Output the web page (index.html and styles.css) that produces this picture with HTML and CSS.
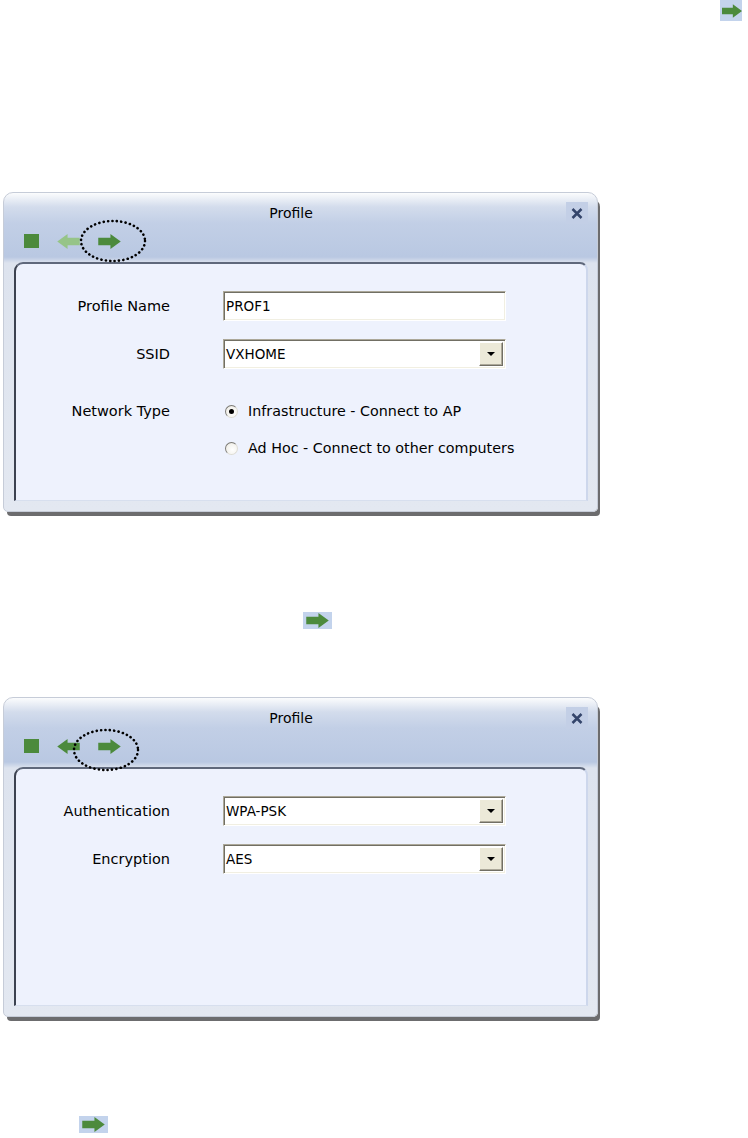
FILE: index.html
```html
<!doctype html>
<html>

<head>
    <meta charset="utf-8">
    <title>Profile</title>
    <link rel="stylesheet" href="styles.css">
</head>

<body>
    <div class="line line-top">
        <span class="inline-icon icon-top">
            <svg width="20" height="16" viewBox="0 0 24 16"><path class="arrow" d="M0 4H13V0L24 8L13 16V12H0Z"/></svg>
        </span>
    </div>

    <div class="dialog dialog-first">
        <div class="titlebar">
            <div class="title-row">
                <div class="title">Profile</div>
                <span class="close">
                    <svg width="12" height="11" viewBox="0 0 12 11"><path d="M1.5 1L10.5 10M10.5 1L1.5 10" /></svg>
                </span>
            </div>
            <div class="toolbar">
                <span class="stop"></span>
                <svg class="tool" width="25" height="15" viewBox="0 0 24 16"><path class="arrow arrow-off" d="M24 4H11V0L0 8L11 16V12H24Z"/></svg>
                <svg class="tool" width="25" height="15" viewBox="0 0 24 16"><path class="arrow" d="M0 4H13V0L24 8L13 16V12H0Z"/></svg>
                <svg class="mark" width="68" height="44" viewBox="0 0 68 44"><ellipse cx="34" cy="22" rx="32" ry="20"/></svg>
            </div>
        </div>
        <div class="panel">
            <div class="form">
                <label>Profile Name</label>
                <div class="field">PROF1</div>

                <label>SSID</label>
                <div class="field combo"><span>VXHOME</span><span class="drop"></span></div>

                <label class="label-top">Network Type</label>
                <div class="radios">
                    <div class="radio-row"><span class="radio checked"></span>Infrastructure - Connect to AP</div>
                    <div class="radio-row"><span class="radio"></span>Ad Hoc - Connect to other computers</div>
                </div>
            </div>
        </div>
    </div>

    <div class="line line-mid">
        <span class="inline-icon">
            <svg width="25" height="15" viewBox="0 0 24 16"><path class="arrow" d="M0 4H13V0L24 8L13 16V12H0Z"/></svg>
        </span>
    </div>

    <div class="dialog dialog-second">
        <div class="titlebar">
            <div class="title-row">
                <div class="title">Profile</div>
                <span class="close">
                    <svg width="12" height="11" viewBox="0 0 12 11"><path d="M1.5 1L10.5 10M10.5 1L1.5 10" /></svg>
                </span>
            </div>
            <div class="toolbar">
                <span class="stop"></span>
                <svg class="tool" width="25" height="15" viewBox="0 0 24 16"><path class="arrow" d="M24 4H11V0L0 8L11 16V12H24Z"/></svg>
                <svg class="tool" width="25" height="15" viewBox="0 0 24 16"><path class="arrow" d="M0 4H13V0L24 8L13 16V12H0Z"/></svg>
                <svg class="mark mark-second" width="68" height="44" viewBox="0 0 68 44"><ellipse cx="34" cy="22" rx="32" ry="20"/></svg>
            </div>
        </div>
        <div class="panel">
            <div class="form">
                <label>Authentication</label>
                <div class="field combo"><span>WPA-PSK</span><span class="drop"></span></div>

                <label>Encryption</label>
                <div class="field combo"><span>AES</span><span class="drop"></span></div>
            </div>
        </div>
    </div>

    <div class="line line-end">
        <span class="inline-icon">
            <svg width="25" height="15" viewBox="0 0 24 16"><path class="arrow" d="M0 4H13V0L24 8L13 16V12H0Z"/></svg>
        </span>
    </div>
</body>

</html>
```

FILE: styles.css
```css
* {
    box-sizing: border-box;
}

html,
body {
    margin: 0;
    padding: 0;
    background: #fff;
    font-family: "DejaVu Sans", Verdana, sans-serif;
    color: #000;
}

/* text lines of the manual, only the icons are left */
.line {
    display: flex;
}

.line-top {
    height: 21px;
    justify-content: flex-end;
    padding-right: 6px;
}

.line-mid {
    margin-top: 100px;
    padding-left: 303px;
}

.line-end {
    margin-top: 99px;
    padding-left: 79px;
}

.inline-icon {
    display: flex;
    align-items: center;
    justify-content: center;
    width: 29px;
    height: 17px;
    background: #c3d3ec;
}

.icon-top {
    width: 22px;
    height: 21px;
    justify-content: flex-end;
}

.arrow {
    fill: #4c8a3c;
}

.arrow-off {
    fill: #96c488;
}

/* dialog window */
.dialog {
    width: 595px;
    height: 320px;
    margin-left: 3px;
    border: 1px solid #c6ccd8;
    border-radius: 10px 10px 5px 5px;
    background: linear-gradient(to bottom, #fbfcfd 0, #d3dcec 14px, #c2cfe6 30px, #b9c8e2 64px, #dde3ee 70px, #e3e8f1 100%);
    box-shadow: 3px 5px 0 -1px #6c6c6e;
    padding: 0 9px 10px 10px;
    display: flex;
    flex-direction: column;
}

.dialog-first {
    margin-top: 171px;
}

.dialog-second {
    margin-top: 68px;
}

.titlebar {
    padding-top: 9px;
    height: 69px;
}

.title-row {
    display: flex;
    align-items: center;
    height: 22px;
    margin-right: -1px;
}

.title {
    flex: 1;
    text-align: center;
    font-size: 14px;
    padding-left: 2px;
}

.close {
    display: flex;
    align-items: center;
    justify-content: center;
    width: 22px;
    height: 22px;
    margin-right: 1px;
    background: #c3cfe6;
}

.close path {
    stroke: #34456b;
    stroke-width: 2.5;
    fill: none;
}

.toolbar {
    position: relative;
    display: flex;
    align-items: center;
    height: 30px;
    margin-top: 2px;
    padding-left: 10px;
}

.stop {
    width: 15px;
    height: 14px;
    background: #4c8a3c;
    margin-right: 17px;
}

.tool {
    margin-right: 16px;
}

/* dotted mark drawn over the toolbar */
.mark {
    position: absolute;
    left: 65px;
    top: -7px;
}

.mark-second {
    left: 58px;
    top: -3px;
}

.mark ellipse {
    fill: none;
    stroke: #000;
    stroke-width: 2.6;
    stroke-linecap: round;
    stroke-dasharray: 0.1 4.3;
}

.panel {
    flex: 1;
    background: #eef2fd;
    border-top: 2px solid #5f687b;
    border-left: 2px solid #3c4250;
    border-right: 2px solid #cdd7ec;
    border-bottom: 1px solid #d7dfee;
    border-radius: 9px 8px 0 0;
    padding-top: 27px;
}

.form {
    display: grid;
    grid-template-columns: 154px 283px;
    column-gap: 53px;
    row-gap: 18px;
    align-items: center;
}

.form label {
    text-align: right;
    font-size: 14.5px;
    white-space: nowrap;
}

.form .label-top {
    align-self: start;
    line-height: 22px;
    margin-top: 13px;
}

/* sunken xp field */
.field {
    height: 30px;
    background: #fff;
    border: 1px solid;
    border-color: #aca899 #fff #fff #aca899;
    box-shadow: inset 1px 1px 0 #716f64, inset -1px -1px 0 #f1efe2;
    padding-left: 2px;
    font-size: 13.5px;
    line-height: 28px;
}

.combo {
    display: flex;
    align-items: center;
    justify-content: space-between;
    padding-right: 2px;
}

.drop {
    position: relative;
    width: 24px;
    height: 24px;
    background: #ece9d8;
    border: 1px solid;
    border-color: #fff #716f64 #716f64 #fff;
    box-shadow: inset -1px -1px 0 #aca899;
}

.drop::after {
    content: "";
    position: absolute;
    left: 7px;
    top: 9px;
    border-left: 4px solid transparent;
    border-right: 4px solid transparent;
    border-top: 4px solid #000;
}

.radios {
    display: flex;
    flex-direction: column;
    gap: 15px;
    margin-top: 13px;
}

.radio-row {
    display: flex;
    align-items: center;
    height: 22px;
    font-size: 14.3px;
    white-space: nowrap;
    margin-left: 2px;
}

.radio {
    position: relative;
    flex: none;
    width: 13px;
    height: 13px;
    border-radius: 50%;
    border: 1px solid #7c7b76;
    border-right-color: #dedcd4;
    border-bottom-color: #dedcd4;
    background: radial-gradient(circle at 60% 60%, #fff 0, #f4f3ee 60%, #dcdad2 100%);
    margin-right: 10px;
}

.radio.checked::after {
    content: "";
    position: absolute;
    left: 3px;
    top: 3px;
    width: 5px;
    height: 5px;
    border-radius: 50%;
    background: #000;
}
```
